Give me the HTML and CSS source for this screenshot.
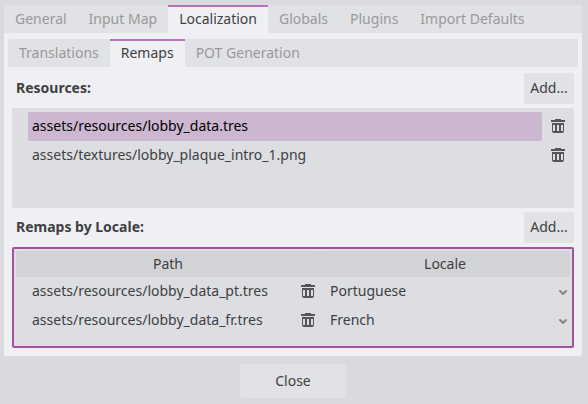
FILE: index.html
```html
<!DOCTYPE html>
<html lang="en">
<head>
<meta charset="utf-8">
<meta name="viewport" content="width=device-width, initial-scale=1">
<title>Project Settings</title>
<link rel="stylesheet" href="styles.css">
</head>
<body>
<svg class="sprite" aria-hidden="true">
  <symbol id="trash" viewBox="0 0 16 16">
    <path fill-rule="evenodd" d="M5 1v1H1v2h14V2h-4V1zM2 5v8a2 2 0 0 0 2 2h8a2 2 0 0 0 2-2V5zm1 2h2v6H3zm4 0h2v6H7zm4 0h2v6h-2z"/>
  </symbol>
  <symbol id="chevron" viewBox="0 0 8 6">
    <path d="M1 1l3 3 3-3" fill="none" stroke="currentColor" stroke-width="2" stroke-linecap="round" stroke-linejoin="round"/>
  </symbol>
</svg>
<main class="dialog">
  <div class="panel">
    <div class="tabs" role="tablist">
      <button class="tab" role="tab">General</button>
      <button class="tab" role="tab">Input Map</button>
      <button class="tab active" role="tab" aria-selected="true">Localization</button>
      <button class="tab" role="tab">Globals</button>
      <button class="tab" role="tab">Plugins</button>
      <button class="tab" role="tab">Import Defaults</button>
    </div>
    <div class="page">
      <div class="tabs" role="tablist">
        <button class="tab" role="tab">Translations</button>
        <button class="tab active" role="tab" aria-selected="true">Remaps</button>
        <button class="tab" role="tab">POT Generation</button>
      </div>
      <div class="content">
        <div class="section-head">
          <h2>Resources:</h2>
          <button class="button">Add...</button>
        </div>
        <ul class="list">
          <li class="row">
            <span class="path selected">assets/resources/lobby_data.tres</span>
            <button class="icon-button" aria-label="Remove"><svg class="trash"><use href="#trash"/></svg></button>
          </li>
          <li class="row">
            <span class="path">assets/textures/lobby_plaque_intro_1.png</span>
            <button class="icon-button" aria-label="Remove"><svg class="trash"><use href="#trash"/></svg></button>
          </li>
        </ul>
        <div class="section-head">
          <h2>Remaps by Locale:</h2>
          <button class="button">Add...</button>
        </div>
        <div class="remaps">
          <table>
            <thead>
              <tr><th>Path</th><th class="locale-col">Locale</th></tr>
            </thead>
            <tbody>
              <tr>
                <td>
                  <div class="row">
                    <span class="path">assets/resources/lobby_data_pt.tres</span>
                    <button class="icon-button" aria-label="Remove"><svg class="trash"><use href="#trash"/></svg></button>
                  </div>
                </td>
                <td>
                  <div class="locale">
                    <select aria-label="Locale"><option selected>Portuguese</option><option>French</option></select>
                    <svg class="chevron"><use href="#chevron"/></svg>
                  </div>
                </td>
              </tr>
              <tr>
                <td>
                  <div class="row">
                    <span class="path">assets/resources/lobby_data_fr.tres</span>
                    <button class="icon-button" aria-label="Remove"><svg class="trash"><use href="#trash"/></svg></button>
                  </div>
                </td>
                <td>
                  <div class="locale">
                    <select aria-label="Locale"><option>Portuguese</option><option selected>French</option></select>
                    <svg class="chevron"><use href="#chevron"/></svg>
                  </div>
                </td>
              </tr>
            </tbody>
          </table>
        </div>
      </div>
    </div>
  </div>
  <button class="button close">Close</button>
</main>
</body>
</html>
```
FILE: styles.css
```css
* {
  box-sizing: border-box;
}

body {
  margin: 0;
  background: #d9dade;
  color: #404042;
  font: 14px/20px "Noto Sans", sans-serif;
}

button,
select {
  margin: 0;
  padding: 0;
  border: 0;
  background: none;
  color: inherit;
  font: inherit;
}

.sprite {
  display: none;
}

.dialog {
  display: flex;
  flex-direction: column;
  padding: 5px 6px 6px 4px;
}

.panel {
  border-radius: 2px;
  background: #eff0f4;
}

.tabs {
  display: flex;
  height: 28px;
  border-radius: 2px 2px 0 0;
  background: #e1e2e5;
}

.tab {
  padding: 0 11px 2px;
  border-top: 2px solid transparent;
  color: #99999b;
  white-space: nowrap;
}

.tab.active {
  border-top-color: #b872b6;
  background: #eff0f4;
  color: #404042;
}

.page {
  padding: 6px 4px 8px;
}

.content {
  display: flex;
  flex-direction: column;
  gap: 4px;
  padding: 6px 4px 0;
}

.section-head {
  display: flex;
  align-items: flex-start;
  justify-content: space-between;
  padding-left: 4px;
}

h2 {
  margin: 0;
  padding: 5px 0 6px;
  font-size: 14px;
  font-weight: 700;
}

.button {
  min-width: 50px;
  padding: 5px 6px 6px;
  border-radius: 2px;
  background: #e1e2e5;
}

.list {
  min-height: 100px;
  margin: 0;
  padding: 4px 4px 4px 16px;
  border-radius: 2px;
  background: #dddee2;
  list-style: none;
}

.row {
  display: flex;
  height: 29px;
}

.path {
  flex: 1;
  padding: 4px;
  border-radius: 2px;
}

.path.selected {
  background: #ccb7d0;
  color: #000;
}

.icon-button {
  display: flex;
  padding: 6px 4px 0 8px;
  color: #555557;
}

.trash {
  width: 16px;
  height: 16px;
  fill: currentColor;
}

.remaps {
  min-height: 101px;
  padding: 2px;
  border: 2px solid #a44fa4;
  border-radius: 2px;
  background: #dddee2;
}

table {
  width: 100%;
  border-spacing: 0;
  table-layout: fixed;
}

th {
  height: 26px;
  padding: 0;
  border-radius: 2px;
  background: #d2d3d6;
  font-weight: 400;
}

td {
  padding: 0;
}

td .row {
  padding-left: 12px;
}

.locale-col {
  width: 250px;
}

.locale {
  position: relative;
  height: 29px;
  padding-left: 6px;
}

.locale select {
  width: 100%;
  height: 28px;
  padding: 0 20px 0 4px;
  appearance: none;
}

.chevron {
  position: absolute;
  top: 13px;
  right: 3px;
  width: 8px;
  height: 6px;
  color: #858587;
  pointer-events: none;
}

.close {
  align-self: center;
  width: 106px;
  height: 34px;
  margin-top: 8px;
}
```
